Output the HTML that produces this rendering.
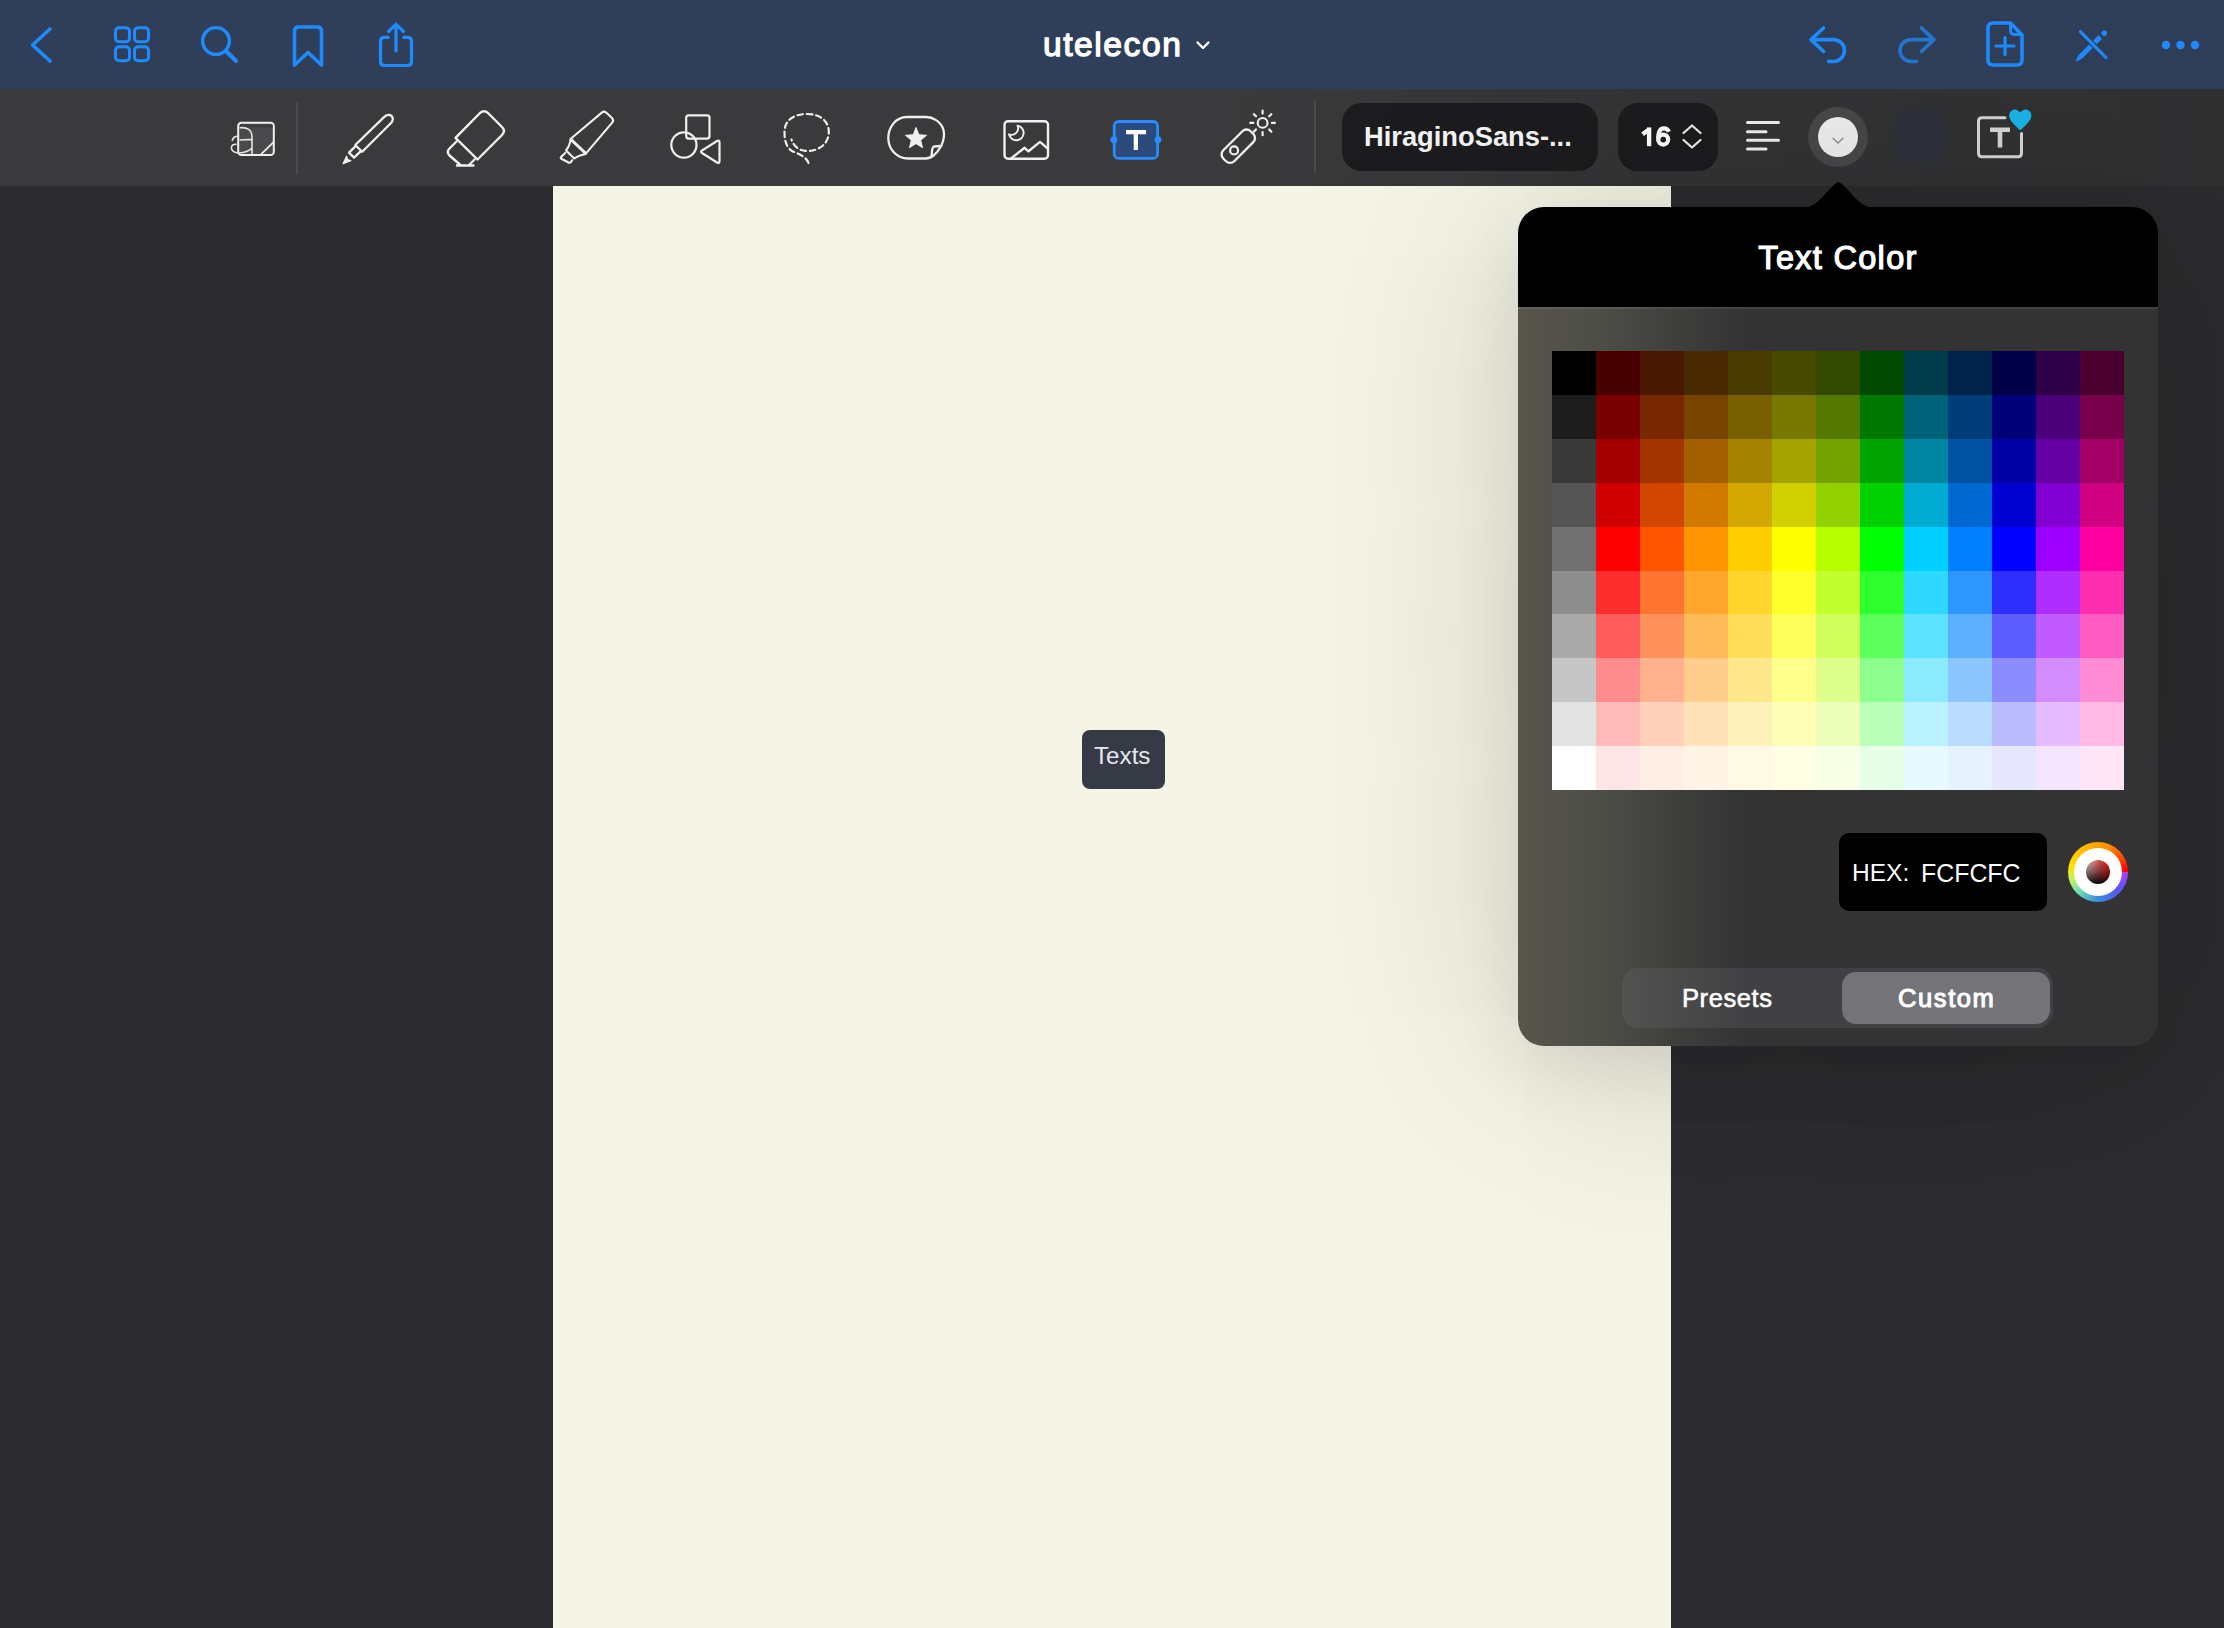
<!DOCTYPE html>
<html><head><meta charset="utf-8">
<style>
*{margin:0;padding:0;box-sizing:border-box}
html,body{width:2224px;height:1628px;overflow:hidden;background:#2c2c2e;font-family:"Liberation Sans",sans-serif;position:relative}
.abs{position:absolute}
#nav{left:0;top:0;width:2224px;height:89px;background:#303f59}
#tool{left:0;top:89px;width:2224px;height:97px;background:#3a3a3c}
#paper{left:553px;top:186px;width:1118px;height:1442px;background:#f5f5e7}
svg.ic{position:absolute;left:0;top:0;overflow:visible}
.t{position:absolute;white-space:nowrap;line-height:1}
#pop{left:1518px;top:207px;width:640px;height:839px;border-radius:26px;overflow:hidden}
#popshadow{left:1518px;top:207px;width:640px;height:839px;border-radius:26px;box-shadow:0 10px 220px 0 rgba(0,0,0,0.2),0 20px 70px rgba(0,0,0,0.09)}
#pophead{left:0;top:0;width:640px;height:100px;background:#000}
#popbody{left:0;top:100px;width:640px;height:739px;
 background:linear-gradient(90deg,#56564c 0px,#4e4e48 80px,#3e3e3c 160px,#333334 230px,#333335 640px)}
#grid{left:34px;top:144px;width:572px;height:439px}
.gr{display:flex;width:572px}
.gr i{display:block;width:44px;height:100%}
#hexbox{left:321px;top:626px;width:208px;height:78px;background:#000;border-radius:10px}
#wheel{left:550px;top:635px;width:60px;height:60px;border-radius:50%;
 background:conic-gradient(from 90deg,#b040ff 0deg,#5a55f5 40deg,#3a8ae0 90deg,#70e0b0 135deg,#c8f060 165deg,#ffe400 190deg,#ffb400 245deg,#ff9000 290deg,#ff4a00 330deg,#ff0000 357deg,#ff0000 360deg)}
#wheel .in{left:6px;top:6px;width:48px;height:48px;border-radius:50%;background:#fff}
#wheel .ball{left:18px;top:18px;width:24px;height:24px;border-radius:50%;
 background:linear-gradient(180deg,rgba(0,0,0,0.05) 0%,rgba(0,0,0,0.45) 50%,rgba(0,0,0,0.95) 100%),linear-gradient(90deg,#e6d2d2 0%,#e05050 60%,#ff1a1a 100%)}
#seg{left:104px;top:761px;width:431px;height:60px;border-radius:16px;background:rgba(120,120,128,0.22)}
#segsel{left:324px;top:765px;width:208px;height:52px;border-radius:14px;background:#737378}
</style></head><body>
<div id="nav" class="abs"></div>
<div id="tool" class="abs"></div>
<div class="abs" style="left:0;top:89px;width:2224px;height:97px;background:linear-gradient(90deg,rgba(0,0,0,0) 1200px,rgba(0,0,0,0.1) 1650px,rgba(0,0,0,0.16) 2224px)"></div>
<div id="paper" class="abs"></div>

<!-- NAV ICONS -->
<svg class="ic" width="2224" height="186" fill="none" stroke="#1f8bff" stroke-width="3.6" stroke-linecap="round" stroke-linejoin="round">
  <path d="M50,29 L32.5,45 L50,61"/>
  <rect x="115.5" y="27.8" width="14" height="14" rx="3.5" stroke-width="3"/>
  <rect x="134.5" y="27.8" width="14" height="14" rx="3.5" stroke-width="3"/>
  <rect x="115.5" y="46.8" width="14" height="14" rx="3.5" stroke-width="3"/>
  <rect x="134.5" y="46.8" width="14" height="14" rx="3.5" stroke-width="3"/>
  <circle cx="216" cy="41" r="13.4" stroke-width="3.4"/>
  <path d="M226,51 L236,61" stroke-width="4"/>
  <path d="M294.5,65 V31 Q294.5,27 298.5,27 H317.5 Q321.5,27 321.5,31 V65 L308,52.5 Z"/>
  <path d="M389.5,37.3 H384.5 Q380.5,37.3 380.5,41.3 V61.5 Q380.5,65.5 384.5,65.5 H407.5 Q411.5,65.5 411.5,61.5 V41.3 Q411.5,37.3 407.5,37.3 H402.5" stroke-width="3.2" stroke-linecap="butt"/>
  <path d="M396,51 V24.5 M388.5,31.5 L396,24.3 L403.5,31.5" stroke-width="3.2"/>
  <!-- undo -->
  <path d="M1823.6,28 L1811,39.6 L1823.6,51.5 M1811.5,39.6 H1833.5 A10.95,10.95 0 0 1 1833.5,61.5 H1828.5"/>
  <!-- redo -->
  <path stroke="#2476cf" d="M1921.4,28 L1934,39.6 L1921.4,51.5 M1933.5,39.6 H1911 A10.95,10.95 0 0 0 1911,61.5 H1916.5"/>
  <!-- new page -->
  <path d="M2010.5,23 H1993 Q1988,23 1988,28 V60 Q1988,65 1993,65 H2017 Q2022,65 2022,60 V35 Z"/>
  <path d="M2010.5,24 V30 Q2010.5,34.5 2015,34.5 H2021" stroke-width="3"/>
  <path d="M1996,46 H2014 M2005,37.5 V54.5" stroke-width="3.2"/>
  <!-- pencil cross -->
  <path d="M2076.3,60.8 Q2077.5,56.5 2079.5,54.5 L2098.7,35.6 L2101.7,38.8 L2082.5,57.7 Q2080.5,59.6 2076.3,60.8 Z" fill="#1f8bff" stroke="#1f8bff" stroke-width="0.8" stroke-linejoin="round"/>
  <circle cx="2104.3" cy="33.2" r="2.7" fill="#1f8bff" stroke="none"/>
  <path d="M2080.2,31.5 L2106.2,57.8" stroke="#303f59" stroke-width="5.6" stroke-linecap="butt"/>
  <path d="M2080.4,31.7 L2106,57.6" stroke-width="3.1"/>
  <!-- dots -->
  <circle cx="2166" cy="45" r="4.2" fill="#1f8bff" stroke="none"/>
  <circle cx="2180.5" cy="45" r="4.2" fill="#1f8bff" stroke="none"/>
  <circle cx="2195" cy="45" r="4.2" fill="#1f8bff" stroke="none"/>
</svg>

<!-- Title -->
<div class="t" style="left:1043px;top:28px;font-size:33.6px;color:#fff;-webkit-text-stroke:1.3px #fff;letter-spacing:1.55px">utelecon</div>
<svg class="ic" width="2224" height="90" fill="none" stroke="#fff" stroke-width="2.4" stroke-linecap="round" stroke-linejoin="round">
  <path d="M1197.5,42.5 L1203,48 L1208.5,42.5"/>
</svg>

<!-- TOOLBAR ICONS -->
<svg class="ic" width="2224" height="186" fill="none" stroke="#f0f0f0" stroke-width="2.4" stroke-linecap="round" stroke-linejoin="round">
  <!-- page layout -->
  <rect x="238.2" y="122.8" width="35.6" height="32.3" rx="3.2" fill="#4a4a4d" stroke-width="2"/>
  <path d="M240,124.5 H272.5 V127.5 H240 Z" fill="#3d3d3f" stroke="none"/>
  <path d="M261.5,153.9 L273.3,142.4" stroke-width="1.8"/>
  <path d="M240.2,127.7 C247,127 252,130 252,137 V153.6 M240.2,140 L251.7,139.4 M251.4,148.5 C249,151.5 245,152.6 238.5,153 C234,153 231.4,150.5 231.4,147.8 C231.4,145.5 233.5,144.3 236.1,144.3 M232.3,140.4 C233,138 235,136.6 236.8,136.4" stroke-width="1.6" stroke="#e4e4e4"/>
  <path d="M297,103 V174" stroke="#515154" stroke-width="1.6"/>
  <!-- pen -->
  <path d="M355.3,145 L384,117.2 C387,114.3 390,114.5 391.6,116.1 C393.2,117.7 393.5,120.6 390.8,123.3 L362.2,151.8 Z" stroke-width="2.3"/>
  <path d="M355.6,146.2 L349,152.6 L354,157.6 L360.6,151.3" stroke-width="2.3"/>
  <path d="M346.6,156.2 L343,163.8 L350.8,160.6 L347.6,159.6 Z" fill="#f0f0f0" stroke-width="1.2"/>
  <!-- eraser -->
  <path d="M455.5,137.8 L480,113 Q484,109.5 488,113 L502,127 Q506,131 502,135 L477.5,159.5 Z"/>
  <path d="M456.5,141.5 L449.5,148.5 Q446,152 449.5,155.5 L460.5,165 M474.5,159.5 L469,165 M457,165.5 H473.5"/>
  <!-- highlighter -->
  <path d="M570.8,138.7 L601.8,112.6 Q604.2,110.6 606.4,112.8 L612,118 Q614.2,120.2 612.2,122.6 L585.6,153.9 Z" stroke-width="2.1"/>
  <path d="M571,139.6 L585.2,152.8" stroke-width="2.8"/>
  <path d="M570.8,138.7 C570.2,143 569.5,146.5 566,150.4 L574.3,158.6 C576.5,156.5 578.5,155.5 585.6,153.9" stroke-width="2.1"/>
  <path d="M565.2,153 L561.2,156.8 Q560.2,157.9 561.4,158.8 L568.4,162.5 Q569.6,163.2 570.6,162.2 L572.2,160.3" stroke-width="2.1"/>
  <!-- shapes -->
  <rect x="686.2" y="115.3" width="23.3" height="23.3" rx="2.5" stroke-width="2.2"/>
  <circle cx="683.9" cy="145" r="12.6" stroke-width="2.2"/>
  <path d="M702,150.5 Q700,151.8 702,153 L717,162.5 Q719.5,164 719.5,161 V142.5 Q719.5,139.5 717,141 Z" stroke-width="2.2"/>
  <!-- lasso -->
  <path d="M808.5,163 C806,156 798,154 792,151 C786,147 784.5,140 784.5,132 C784.5,120 794,114 807,114 C820,114 828.8,121 828.8,132 C828.8,143 820,151 807,151 C799,151 793.5,146 791.5,139.5" stroke-width="2.2" stroke-dasharray="5.5 3.8"/>
  <!-- sticker -->
  <path d="M941,146 C944,141 944.5,134 943.5,130 C941,121 932,117 926,117 H907 C896,117 888.3,127 888.3,138 C888.3,149.5 897,158.5 908,158.5 H926 C931,158.5 937,154 941,146 Z" stroke-width="2.3"/>
  <path d="M931.5,157 C932,151 932,147 934,146.5 C937,146 940,146 941.5,146" stroke-width="2.3"/>
  <path d="M916,127.8 L919,134.8 L926.5,135.3 L920.7,140.2 L922.5,147.7 L916,143.6 L909.5,147.7 L911.3,140.2 L905.5,135.3 L913,134.8 Z" fill="#f0f0f0" stroke-width="1"/>
  <!-- image -->
  <rect x="1004.5" y="121.2" width="43.5" height="37.5" rx="3.5" stroke-width="2.4"/>
  <path d="M1011,158.5 L1024.6,147.8 L1028.5,151.3 L1040,141.9 L1047.5,148.3" stroke-width="2.4"/>
  <path d="M1017.6,125.6 A7.4,7.4 0 1 1 1009,134.3 A6.6,6.6 0 0 0 1017.6,125.6 Z" stroke-width="1.9"/>
  <!-- laser -->
  <g transform="rotate(-45 1238.3 146.2)"><rect x="1219" y="138.5" width="38.6" height="15.4" rx="5.8" stroke-width="2.3"/></g>
  <circle cx="1234.1" cy="150.4" r="4" stroke-width="2.2"/>
  <circle cx="1262.6" cy="122.9" r="4.9" stroke-width="2.1"/>
  <path d="M1262.6,110.6 V113.6 M1262.6,132.2 V135.2 M1250.3,122.9 H1253.3 M1271.9,122.9 H1274.9 M1253.9,114.2 L1256,116.3 M1269.2,129.5 L1271.3,131.6 M1271.3,114.2 L1269.2,116.3 M1253.9,131.6 L1256,129.5" stroke-width="2.2"/>
  <path d="M1315,101.5 V172" stroke="#515154" stroke-width="1.6"/>
  <!-- align -->
  <path d="M1747.5,122.6 H1778.5 M1747.5,131.7 H1766 M1747.5,140.3 H1778.5 M1747.5,149 H1766" stroke-width="3"/>
  <!-- T box heart -->
  <path d="M2005,117.8 H1982 Q1978.5,117.8 1978.5,121.3 V153.3 Q1978.5,156.8 1982,156.8 H2018 Q2021.5,156.8 2021.5,153.3 V133.5" stroke="#d6d6d6" stroke-width="3"/>
  <path d="M1990,129.7 H2010 M2000,130 V147.5" stroke="#d6d6d6" stroke-width="4.6" stroke-linecap="butt"/>
  <path d="M2020.2,130.3 C2016,126 2009.2,121 2009.2,115.5 C2009.2,111.8 2012,109.4 2014.8,109.4 C2017.2,109.4 2019,110.8 2020.2,112.6 C2021.4,110.8 2023.2,109.4 2025.6,109.4 C2028.4,109.4 2031.4,111.8 2031.4,115.5 C2031.4,121 2024.4,126 2020.2,130.3 Z" fill="#19b5ea" stroke="none"/>
</svg>

<!-- text tool (selected) -->
<svg class="ic" width="2224" height="186">
  <defs><linearGradient id="tg" x1="0" y1="0" x2="0" y2="1"><stop offset="0" stop-color="#2a4b7e"/><stop offset="1" stop-color="#2b4a78"/></linearGradient></defs>
  <rect x="1114.2" y="121.5" width="43.4" height="36.9" rx="4.5" fill="url(#tg)" stroke="#2a8cff" stroke-width="2.8"/>
  <circle cx="1113.8" cy="139.7" r="3.4" fill="#2a8cff"/><circle cx="1158" cy="139.7" r="3.4" fill="#2a8cff"/>
  <path d="M1126,129.9 H1146.1 V134.2 H1138 V150 H1133.7 V134.2 H1126 Z" fill="#fff"/>
</svg>

<!-- font box -->
<div class="abs" style="left:1342px;top:103px;width:256px;height:68px;border-radius:20px;background:#1c1c1e"></div>
<div class="t" style="left:1364px;top:123px;font-size:27.3px;font-weight:bold;color:#f4f4f4">HiraginoSans-...</div>
<div class="abs" style="left:1618px;top:103px;width:100px;height:68px;border-radius:20px;background:#1c1c1e"></div>
<svg class="ic" width="2224" height="186" fill="none" stroke="#fff" stroke-width="4.4">
  <path d="M1642.6,134.2 L1649.1,129.4" stroke-linecap="butt"/>
  <path d="M1649.1,127.4 V146.2" stroke-linecap="butt"/>
  <circle cx="1663.2" cy="139.6" r="5" stroke-width="4.2"/>
  <path d="M1668.9,131.8 C1668,129.4 1666,128.4 1663.8,128.4 C1659.6,128.4 1658.2,132.8 1658.2,139.2" stroke-width="4.2"/>
</svg>
<svg class="ic" width="2224" height="186" fill="none" stroke="#ececec" stroke-width="2.3" stroke-linecap="round" stroke-linejoin="round">
  <path d="M1683.5,133 L1692,125.5 L1700.5,133 M1683.5,140 L1692,147.5 L1700.5,140"/>
</svg>

<!-- color circle -->
<div class="abs" style="left:1808px;top:107px;width:60px;height:60px;border-radius:50%;background:#48484a"></div>
<div class="abs" style="left:1818px;top:117px;width:40px;height:40px;border-radius:50%;background:#efefef"></div>
<svg class="ic" width="2224" height="186" fill="none" stroke="#8a8a8a" stroke-width="1.3" stroke-linecap="round" stroke-linejoin="round">
  <path d="M1833,138.2 L1838,143 L1843,138.2"/>
</svg>
<div class="abs" style="left:1897px;top:111px;width:46px;height:50px;background:#2e323e;filter:blur(7px)"></div>

<!-- Texts box -->
<div class="abs" style="left:1082px;top:730px;width:83px;height:59px;border-radius:8px;background:#363a44"></div>
<div class="t" style="left:1094px;top:744px;font-size:24.2px;color:#e6e7ee">Texts</div>

<!-- POPOVER -->
<div id="popshadow" class="abs"></div>
<svg class="ic" width="2224" height="260">
  <path d="M1804,208 C1819,207 1830,185 1838.5,182 C1847,185 1858,207 1873,208 Z" fill="#000"/>
</svg>
<div id="pop" class="abs">
  <div id="pophead" class="abs"></div>
  <div id="popbody" class="abs"></div>
  <div class="abs" style="left:0;top:100px;width:640px;height:1.5px;background:rgba(255,255,255,0.07)"></div>
  <div class="t" style="left:0;width:640px;text-align:center;top:35px;font-size:32.5px;color:#fff;-webkit-text-stroke:1.2px #fff;letter-spacing:1.3px">Text Color</div>
  <div id="grid" class="abs">
<div class="gr" style="height:44px"><i style="background:#000000"></i><i style="background:#490000"></i><i style="background:#491800"></i><i style="background:#492a00"></i><i style="background:#493a00"></i><i style="background:#494900"></i><i style="background:#344900"></i><i style="background:#004900"></i><i style="background:#003b49"></i><i style="background:#002449"></i><i style="background:#000049"></i><i style="background:#2d0049"></i><i style="background:#49002e"></i></div>
<div class="gr" style="height:44px"><i style="background:#1c1c1c"></i><i style="background:#780000"></i><i style="background:#782800"></i><i style="background:#784500"></i><i style="background:#786000"></i><i style="background:#787800"></i><i style="background:#557800"></i><i style="background:#007800"></i><i style="background:#006278"></i><i style="background:#003c78"></i><i style="background:#000078"></i><i style="background:#4a0078"></i><i style="background:#78004b"></i></div>
<div class="gr" style="height:44px"><i style="background:#393939"></i><i style="background:#a30000"></i><i style="background:#a33600"></i><i style="background:#a35e00"></i><i style="background:#a38300"></i><i style="background:#a3a300"></i><i style="background:#74a300"></i><i style="background:#00a300"></i><i style="background:#0085a3"></i><i style="background:#0052a3"></i><i style="background:#0000a3"></i><i style="background:#6400a3"></i><i style="background:#a30066"></i></div>
<div class="gr" style="height:44px"><i style="background:#555555"></i><i style="background:#d10000"></i><i style="background:#d14600"></i><i style="background:#d17900"></i><i style="background:#d1a700"></i><i style="background:#d1d100"></i><i style="background:#94d100"></i><i style="background:#00d100"></i><i style="background:#00abd1"></i><i style="background:#0069d1"></i><i style="background:#0000d1"></i><i style="background:#8100d1"></i><i style="background:#d10083"></i></div>
<div class="gr" style="height:44px"><i style="background:#717171"></i><i style="background:#ff0000"></i><i style="background:#ff5500"></i><i style="background:#ff9300"></i><i style="background:#ffcc00"></i><i style="background:#ffff00"></i><i style="background:#b5ff00"></i><i style="background:#00ff00"></i><i style="background:#00d0ff"></i><i style="background:#0080ff"></i><i style="background:#0000ff"></i><i style="background:#9d00ff"></i><i style="background:#ff00a0"></i></div>
<div class="gr" style="height:43px"><i style="background:#8e8e8e"></i><i style="background:#ff2e2e"></i><i style="background:#ff742e"></i><i style="background:#ffa62e"></i><i style="background:#ffd52e"></i><i style="background:#ffff2e"></i><i style="background:#c2ff2e"></i><i style="background:#2eff2e"></i><i style="background:#2ed8ff"></i><i style="background:#2e97ff"></i><i style="background:#2e2eff"></i><i style="background:#af2eff"></i><i style="background:#ff2eb1"></i></div>
<div class="gr" style="height:44px"><i style="background:#aaaaaa"></i><i style="background:#ff5c5c"></i><i style="background:#ff925c"></i><i style="background:#ffba5c"></i><i style="background:#ffde5c"></i><i style="background:#ffff5c"></i><i style="background:#d0ff5c"></i><i style="background:#5cff5c"></i><i style="background:#5ce1ff"></i><i style="background:#5caeff"></i><i style="background:#5c5cff"></i><i style="background:#c05cff"></i><i style="background:#ff5cc2"></i></div>
<div class="gr" style="height:44px"><i style="background:#c6c6c6"></i><i style="background:#ff8c8c"></i><i style="background:#ffb28c"></i><i style="background:#ffce8c"></i><i style="background:#ffe88c"></i><i style="background:#ffff8c"></i><i style="background:#deff8c"></i><i style="background:#8cff8c"></i><i style="background:#8ceaff"></i><i style="background:#8cc6ff"></i><i style="background:#8c8cff"></i><i style="background:#d38cff"></i><i style="background:#ff8cd4"></i></div>
<div class="gr" style="height:44px"><i style="background:#e3e3e3"></i><i style="background:#ffbaba"></i><i style="background:#ffd1ba"></i><i style="background:#ffe2ba"></i><i style="background:#fff1ba"></i><i style="background:#ffffba"></i><i style="background:#ebffba"></i><i style="background:#baffba"></i><i style="background:#baf2ff"></i><i style="background:#baddff"></i><i style="background:#babaff"></i><i style="background:#e5baff"></i><i style="background:#ffbae5"></i></div>
<div class="gr" style="height:44px"><i style="background:#ffffff"></i><i style="background:#ffe6e6"></i><i style="background:#ffeee6"></i><i style="background:#fff4e6"></i><i style="background:#fffae6"></i><i style="background:#ffffe6"></i><i style="background:#f8ffe6"></i><i style="background:#e6ffe6"></i><i style="background:#e6faff"></i><i style="background:#e6f2ff"></i><i style="background:#e6e6ff"></i><i style="background:#f5e6ff"></i><i style="background:#ffe6f6"></i></div>
  </div>
  <div id="hexbox" class="abs"></div>
  <div class="t" style="left:334px;top:654px;font-size:24.5px;color:#fff">HEX:</div>
  <div class="t" style="left:403px;top:654px;font-size:24.9px;color:#fff">FCFCFC</div>
  <div id="wheel" class="abs"><div class="abs in"></div><div class="abs ball"></div></div>
  <div id="seg" class="abs"></div>
  <div id="segsel" class="abs"></div>
  <div class="t" style="left:164px;top:779px;font-size:25.5px;color:#fff;letter-spacing:0.6px;-webkit-text-stroke:0.6px #fff">Presets</div>
  <div class="t" style="left:380px;top:779px;font-size:25.5px;color:#fff;letter-spacing:1.6px;-webkit-text-stroke:1.1px #fff">Custom</div>
</div>

</body></html>
